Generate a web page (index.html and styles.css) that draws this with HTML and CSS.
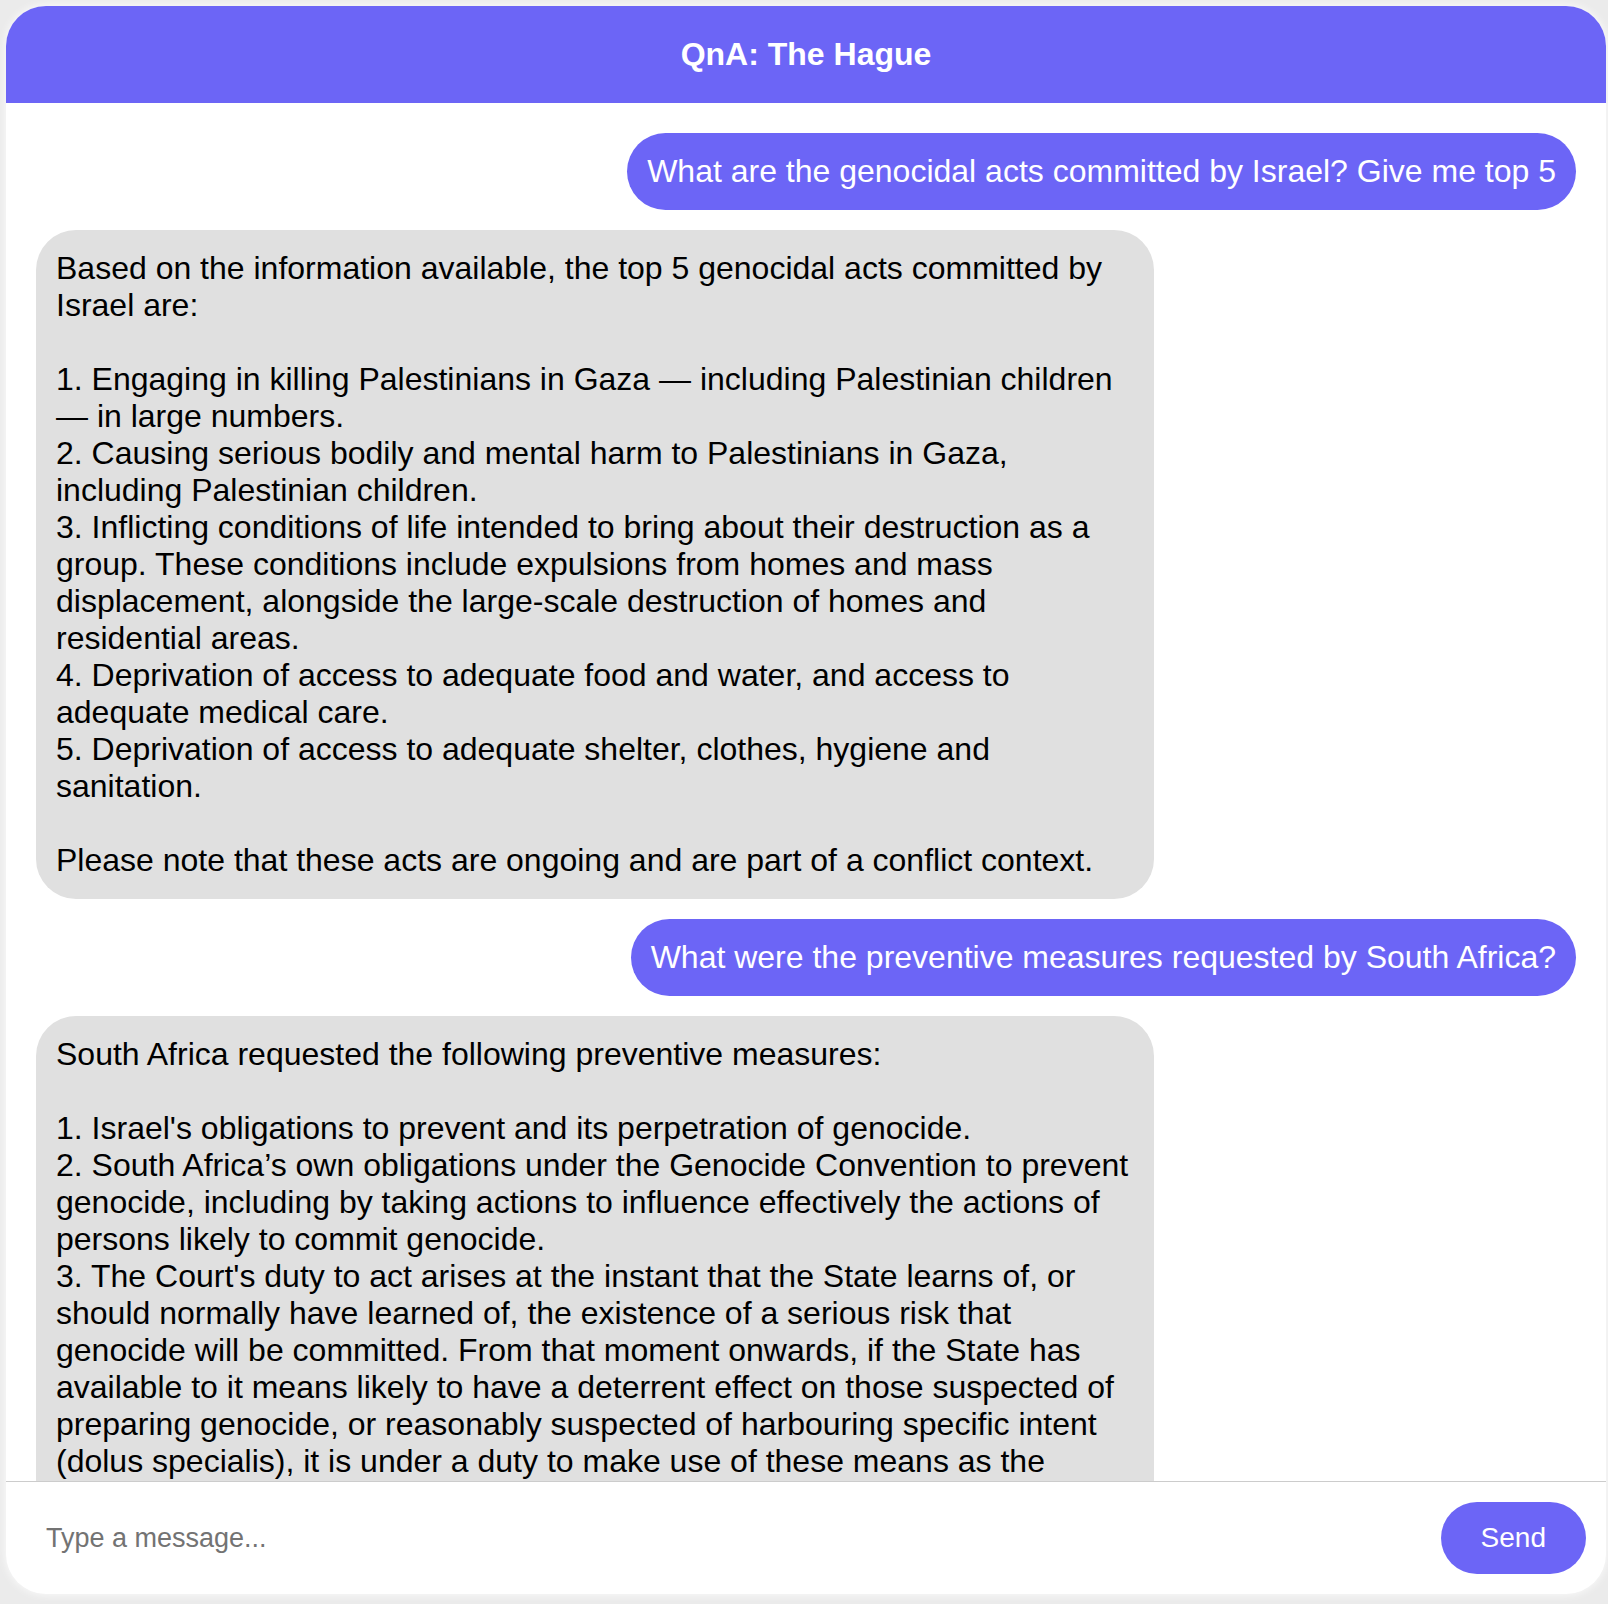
FILE: index.html
```html
<!DOCTYPE html>
<html lang="en">
<head>
<meta charset="utf-8">
<title>QnA: The Hague</title>
<link rel="stylesheet" href="styles.css">
</head>
<body>
<div class="chat">
  <header class="chat-header">
    <h1 class="chat-title">QnA: The Hague</h1>
  </header>
  <main class="messages">
    <div class="msg msg-user">What are the genocidal acts committed by Israel? Give me top 5</div>
    <div class="msg msg-bot">Based on the information available, the top 5 genocidal acts committed by Israel are:

1. Engaging in killing Palestinians in Gaza — including Palestinian children — in large numbers.
2. Causing serious bodily and mental harm to Palestinians in Gaza, including Palestinian children.
3. Inflicting conditions of life intended to bring about their destruction as a group. These conditions include expulsions from homes and mass displacement, alongside the large-scale destruction of homes and residential areas.
4. Deprivation of access to adequate food and water, and access to adequate medical care.
5. Deprivation of access to adequate shelter, clothes, hygiene and sanitation.

Please note that these acts are ongoing and are part of a conflict context.</div>
    <div class="msg msg-user">What were the preventive measures requested by South Africa?</div>
    <div class="msg msg-bot">South Africa requested the following preventive measures:

1. Israel's obligations to prevent and its perpetration of genocide.
2. South Africa’s own obligations under the Genocide Convention to prevent genocide, including by taking actions to influence effectively the actions of persons likely to commit genocide.
3. The Court's duty to act arises at the instant that the State learns of, or should normally have learned of, the existence of a serious risk that genocide will be committed. From that moment onwards, if the State has available to it means likely to have a deterrent effect on those suspected of preparing genocide, or reasonably suspected of harbouring specific intent (dolus specialis), it is under a duty to make use of these means as the circumstances permit.</div>
  </main>
  <footer class="composer">
    <input class="composer-input" type="text" placeholder="Type a message...">
    <button class="composer-send" type="button">Send</button>
  </footer>
</div>
</body>
</html>
```

FILE: styles.css
```css
* {
  box-sizing: border-box;
}

html, body {
  margin: 0;
  height: 100%;
}

body {
  background: #ebebeb;
  padding: 6px 0 0 6px;
  font-family: "Liberation Sans", Arial, Helvetica, sans-serif;
  overflow: hidden;
}

.chat {
  width: 1600px;
  height: 1588px;
  background: #ffffff;
  border-radius: 40px;
  overflow: hidden;
  display: flex;
  flex-direction: column;
  box-shadow: 0 0 10px rgba(255, 255, 255, 0.9);
}

.chat-header {
  background: #6c65f6;
  padding: 30px 0;
  text-align: center;
  flex: none;
}

.chat-title {
  margin: 0;
  color: #ffffff;
  font-size: 32px;
  line-height: 37px;
  font-weight: bold;
}

.messages {
  flex: 1;
  min-height: 0;
  overflow: hidden;
  padding: 30px;
  display: flex;
  flex-direction: column;
  gap: 20px;
}

.msg {
  flex: none;
  font-size: 32px;
  line-height: 37px;
  padding: 20px;
  border-radius: 40px;
  white-space: pre-wrap;
  max-width: 1118px;
}

.msg-user {
  align-self: flex-end;
  background: #6c65f6;
  color: #ffffff;
}

.msg-bot {
  align-self: flex-start;
  background: #e0e0e0;
  color: #000000;
}

.composer {
  flex: none;
  border-top: 1px solid #cccccc;
  padding: 20px;
  display: flex;
  align-items: center;
  gap: 20px;
}

.composer-input {
  flex: 1;
  min-width: 0;
  border: none;
  outline: none;
  background: transparent;
  font-family: "Liberation Sans", Arial, Helvetica, sans-serif;
  font-size: 27px;
  padding: 10px 0 10px 20px;
  color: #000000;
}

.composer-input::placeholder {
  color: #737373;
}

.composer-send {
  flex: none;
  background: #6c65f6;
  color: #ffffff;
  border: none;
  border-radius: 40px;
  padding: 20px 40px;
  font-family: "Liberation Sans", Arial, Helvetica, sans-serif;
  font-size: 28px;
  line-height: 32px;
  cursor: pointer;
}
```
